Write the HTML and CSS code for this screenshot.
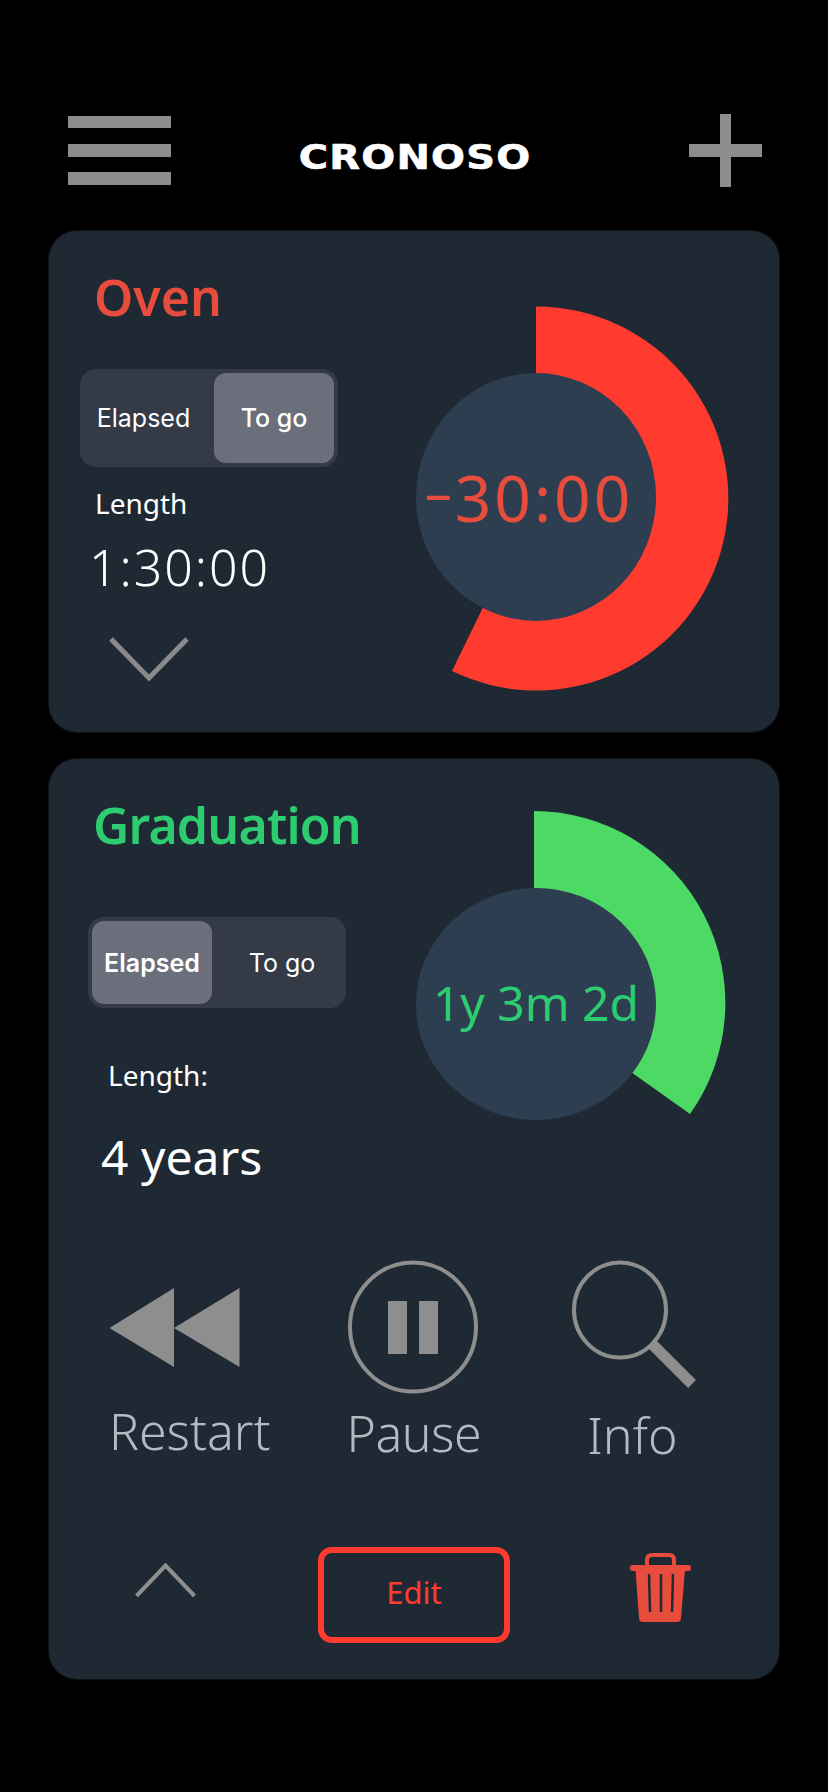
FILE: index.html
```html
<!DOCTYPE html>
<html lang="en">
<head>
    <meta charset="UTF-8">
    <meta name="viewport" content="width=device-width, initial-scale=1.0">
    <title>Cronoso</title>
    <link rel="stylesheet" href="styles.css">
</head>
<body>

    <header class="topbar">
        <svg class="menu-icon" width="103" height="70" viewBox="0 0 103 70">
            <rect x="0" y="0" width="103" height="12"/>
            <rect x="0" y="28" width="103" height="13"/>
            <rect x="0" y="56" width="103" height="13"/>
        </svg>
        <h1 class="brand">CRONOSO</h1>
        <svg class="add-icon" width="73" height="73" viewBox="0 0 73 73">
            <rect x="31" y="0" width="11" height="73"/>
            <rect x="0" y="30" width="73" height="13"/>
        </svg>
    </header>

    <section class="card card-oven">
        <div class="card-main">
            <div class="info">
                <h2 class="title title-red">Oven</h2>
                <div class="toggle">
                    <span class="seg seg-left">Elapsed</span>
                    <span class="seg seg-on">To go</span>
                </div>
                <p class="length">Length</p>
                <p class="amount amount-time">1:30:00</p>
                <svg class="chevron" width="80" height="46" viewBox="0 0 80 46">
                    <path d="M2 2 L40 41 L78 2"/>
                </svg>
            </div>
            <svg class="dial" width="320" height="400" viewBox="0 0 320 400">
                <path class="arc-red" d="M126 6.5 A192 192 0 1 1 42 371 L126 198.5 Z"/>
                <ellipse class="dial-core" cx="126" cy="197" rx="120" ry="124"/>
                <text class="dial-text" x="119" y="222" text-anchor="middle"><tspan class="dial-dash" dy="-9">–</tspan><tspan dy="9">30:00</tspan></text>
            </svg>
        </div>
    </section>

    <section class="card card-grad">
        <div class="card-main">
            <div class="info">
                <h2 class="title title-green">Graduation</h2>
                <div class="toggle toggle-grad">
                    <span class="seg seg-on seg-bold">Elapsed</span>
                    <span class="seg seg-right">To go</span>
                </div>
                <p class="length length-grad">Length:</p>
                <p class="amount amount-grad">4 years</p>
            </div>
            <svg class="dial dial-grad" width="320" height="330" viewBox="0 0 320 330">
                <path class="arc-green" d="M124 10 A192 192 0 0 1 280 313 L124 202 Z"/>
                <ellipse class="dial-core" cx="126" cy="203" rx="120" ry="116"/>
                <text class="dial-text-small" x="126" y="220" text-anchor="middle">1y 3m 2d</text>
            </svg>
        </div>

        <div class="actions">
            <div class="action">
                <svg class="action-icon" width="132" height="134" viewBox="0 0 132 134">
                    <polygon points="0.5,68 65,28 65,107"/>
                    <polygon points="65,68 130.5,28 130.5,107"/>
                </svg>
                <span class="action-label">Restart</span>
            </div>
            <div class="action action-pause">
                <svg class="action-icon" width="132" height="134" viewBox="0 0 132 134">
                    <ellipse class="ring" cx="66" cy="67" rx="63" ry="64.5"/>
                    <rect x="41" y="41" width="19" height="53"/>
                    <rect x="72" y="41" width="19" height="53"/>
                </svg>
                <span class="action-label">Pause</span>
            </div>
            <div class="action action-info">
                <svg class="action-icon" width="126" height="134" viewBox="0 0 126 134">
                    <ellipse class="ring" cx="48" cy="50" rx="46" ry="47.5"/>
                    <path class="handle" d="M81 85 L120 124"/>
                </svg>
                <span class="action-label label-info">Info</span>
            </div>
        </div>

        <div class="card-footer">
            <svg class="chevron-up" width="61" height="34" viewBox="0 0 61 34">
                <path d="M1.5 33 L30.5 2.5 L59.5 33"/>
            </svg>
            <button class="edit-btn">Edit</button>
            <svg class="trash" width="61" height="69" viewBox="0 0 61 69">
                <path class="trash-handle" d="M17 14 V7 Q17 2 22 2 H39 Q44 2 44 7 V14"/>
                <rect x="0" y="12" width="61" height="6" rx="3"/>
                <path d="M5.5 17 H55 L51 65 Q51 69 47 69 H13 Q9 69 9 65 Z"/>
                <path class="trash-slot" d="M19 21 L20 59 M31 21 V59 M43 21 L42 59"/>
            </svg>
        </div>
    </section>

</body>
</html>
```

FILE: styles.css
```css
body{
    margin: 0;
    background-color: #000;
    width: 828px;
    height: 1792px;
    overflow: hidden;
    font-family: "Noto Sans", sans-serif;
}

.topbar{
    height: 231px;
    box-sizing: border-box;
    padding: 116px 66px 0 68px;
    display: flex;
    justify-content: space-between;
    align-items: flex-start;
}

.menu-icon, .add-icon{
    fill: #8c8c8c;
    display: block;
}

.add-icon{
    margin-top: -2px;
}

.brand{
    margin: 22px 30px 0 0;
    color: #fff;
    font-family: "DejaVu Sans", sans-serif;
    font-weight: 700;
    font-size: 33px;
    line-height: 40px;
    letter-spacing: 1px;
    transform: scaleX(1.21);
    -webkit-text-stroke: 0.6px #fff;
}

.card{
    width: 730px;
    box-sizing: border-box;
    margin-left: 49px;
    background-color: #1f2933;
    border-radius: 28px;
    box-shadow: 0 0 0 1px #0d1217;
}

.card-oven{
    height: 501px;
    margin-bottom: 27px;
}

.card-grad{
    height: 920px;
}

.card-main{
    display: flex;
    justify-content: space-between;
}

.info{
    padding-top: 32px;
}

.title{
    margin: 0 0 0 45px;
    font-size: 50px;
    line-height: 68px;
    font-weight: 600;
}

.title-red{
    color: #e74c3c;
}

.title-green{
    color: #2ecc71;
    margin-left: 44px;
    letter-spacing: -0.8px;
}

.toggle{
    margin: 38px 0 0 31px;
    width: 258px;
    height: 98px;
    box-sizing: border-box;
    padding: 4px;
    background-color: #343a46;
    border-radius: 16px;
    display: flex;
    font-family: Inter, sans-serif;
    font-size: 25px;
    color: #fff;
}

.toggle-grad{
    margin: 58px 0 0 39px;
    height: 91px;
}

.seg{
    flex: 1;
    display: flex;
    align-items: center;
    justify-content: center;
}

.seg-left{
    padding-right: 11px;
}

.seg-right{
    padding-left: 10px;
}

.seg-on{
    flex: 0 0 120px;
    background-color: #6b6f7b;
    border-radius: 12px;
    font-weight: 500;
}

.seg-bold{
    font-weight: 600;
}

.length{
    margin: 16px 0 0 46px;
    color: #fff;
    font-size: 28px;
    line-height: 40px;
}

.length-grad{
    margin: 47px 0 0 59px;
}

.amount{
    margin: 10px 0 0 40px;
    color: #fff;
    font-size: 50px;
    line-height: 68px;
    font-weight: 300;
}

.amount-time{
    letter-spacing: 2px;
}

.amount-grad{
    font-weight: 400;
    font-size: 48px;
    margin: 28px 0 0 52px;
}

.chevron{
    display: block;
    margin: 36px 0 0 60px;
    fill: none;
    stroke: #8a8a8a;
    stroke-width: 5;
}

.dial{
    margin: 69px 49px 0 0;
    display: block;
}

.dial-grad{
    margin: 42px 49px 0 0;
}

.arc-red{
    fill: #ff3b30;
}

.arc-green{
    fill: #4cd964;
}

.dial-core{
    fill: #2c3e50;
}

.dial-text{
    font-size: 64px;
    font-weight: 400;
    letter-spacing: 3px;
    fill: #e74c3c;
}

.dial-dash{
    font-size: 54px;
}

.dial-text-small{
    font-size: 48px;
    font-weight: 400;
    fill: #2ecc71;
}

.actions{
    display: flex;
    margin-top: 69px;
    padding-left: 60px;
}

.action{
    display: flex;
    flex-direction: column;
    align-items: flex-start;
}

.action-pause{
    margin-left: 76px;
}

.action-info{
    margin-left: 91px;
}

.action-icon{
    display: block;
    fill: #8e8e8e;
}

.ring{
    fill: none;
    stroke: #8e8e8e;
    stroke-width: 4;
}

.handle{
    fill: none;
    stroke: #8e8e8e;
    stroke-width: 11;
}

.action-label{
    margin-top: 4px;
    color: #b0bcc4;
    font-size: 50px;
    line-height: 66px;
    font-weight: 300;
}

.action-pause .action-label{
    margin-top: 6px;
    letter-spacing: -0.5px;
}

.action-info .action-label{
    margin-top: 8px;
}

.label-info{
    margin-left: 15px;
}

.card-footer{
    display: flex;
    align-items: flex-start;
    margin-top: 79px;
    padding-left: 86px;
}

.chevron-up{
    display: block;
    margin-top: 16px;
    fill: none;
    stroke: #8e8e8e;
    stroke-width: 4;
}

.edit-btn{
    margin: 0 120px 0 122px;
    width: 192px;
    height: 96px;
    padding: 0 0 6px 0;
    background: none;
    border: 6px solid #ff3b30;
    border-radius: 14px;
    color: #ff3b30;
    font-family: "Noto Sans", sans-serif;
    font-size: 31px;
    font-weight: 400;
}

.trash{
    display: block;
    margin-top: 6px;
    fill: #e74c3c;
}

.trash .trash-handle{
    fill: none;
    stroke: #e74c3c;
    stroke-width: 4;
}

.trash .trash-slot{
    fill: none;
    stroke: #1f2933;
    stroke-width: 2.5;
}
```
